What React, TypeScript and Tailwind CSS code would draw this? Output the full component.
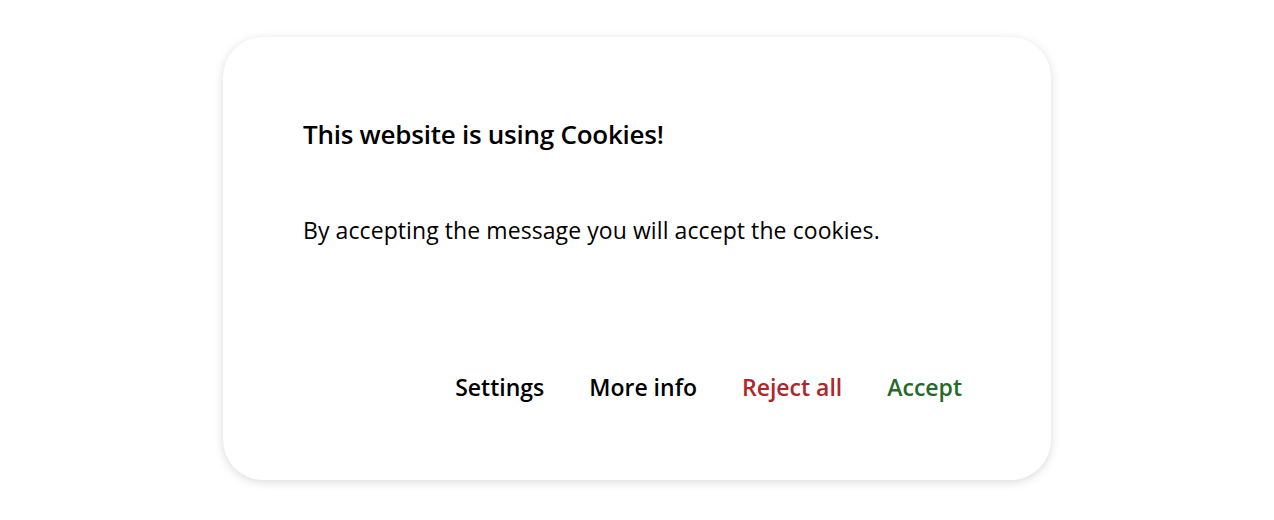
export default function App() {
    return (
        <div className="flex justify-center bg-white pt-[37px] min-h-[520px]" style={{ fontFamily: '"Open Sans", sans-serif' }}>
            <div className="w-[828px] h-[443px] bg-white rounded-[40px] shadow-[0_2px_10px_rgba(0,0,0,0.15)] pl-[80px] pr-[78px] pt-[80px] flex flex-col">
                <h2 className="text-[26px] font-semibold text-black leading-[34px] tracking-[-0.25px]">This website is using Cookies!</h2>
                <p className="text-[23px] text-black leading-[32px] mt-[63px] tracking-[0.08px]">By accepting the message you will accept the cookies.</p>
                <div className="flex justify-end gap-[23px] mt-[125px]">
                    {[
                        { label: "Settings", color: "text-black" },
                        { label: "More info", color: "text-black" },
                        { label: "Reject all", color: "text-[#b0262a]" },
                        { label: "Accept", color: "text-[#27692b]" },
                    ].map(b => (
                        <button key={b.label} className={`px-[11px] text-[23px] font-semibold leading-[32px] ${b.color}`}>
                            {b.label}
                        </button>
                    ))}
                </div>
            </div>
        </div>
    );
}
